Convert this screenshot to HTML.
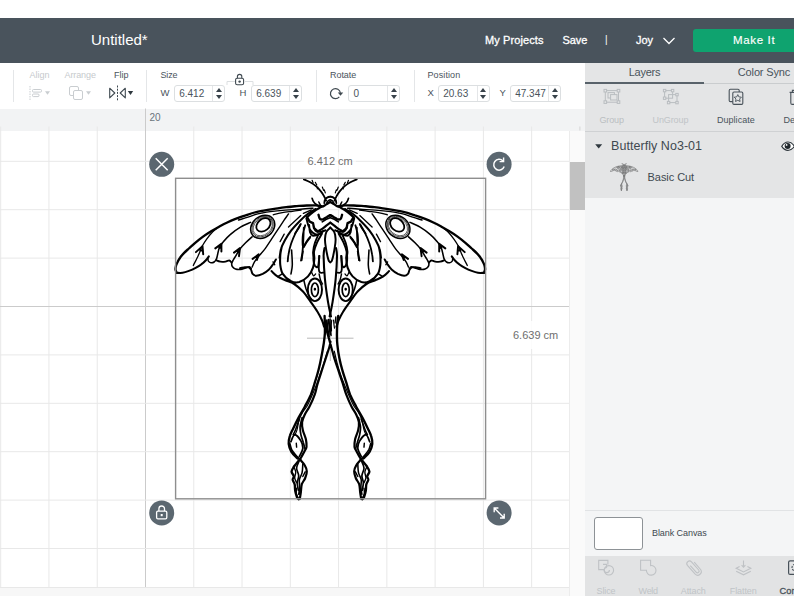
<!DOCTYPE html>
<html><head><meta charset="utf-8"><title>Design Space</title>
<style>
*{box-sizing:border-box;margin:0;padding:0}
html,body{width:794px;height:596px;overflow:hidden;background:#fff;font-family:"Liberation Sans",sans-serif;}
#app{position:relative;width:794px;height:596px;overflow:hidden;background:#fff}
.abs{position:absolute}
svg{position:absolute;overflow:visible}
#hdr{left:0;top:18px;width:794px;height:45px;background:#49535c}
.t{position:absolute;white-space:nowrap;line-height:14px;height:14px;color:#4a545c}
#hdr .t{color:#fff}
#tb{left:0;top:63px;width:585px;height:45.5px;background:#fff}
.l9{font-size:9px}
.dis{color:#c6cacd !important}
.inp{position:absolute;top:22px;height:16.5px;border:1px solid #dcdfe1;border-radius:3px;background:#fff}
.inp .v{position:absolute;left:4.2px;top:0.5px;font-size:10px;line-height:14px;color:#4a545c;white-space:nowrap}
.inp .s{position:absolute;right:11px;top:0;width:1px;height:100%;background:#e4e6e8}
.inp .u{position:absolute;right:2.5px;top:2.2px;width:0;height:0;border-left:3px solid transparent;border-right:3px solid transparent;border-bottom:4.6px solid #38424a}
.inp .d{position:absolute;right:2.5px;top:8.6px;width:0;height:0;border-left:3px solid transparent;border-right:3px solid transparent;border-top:4.6px solid #38424a}
.sep{position:absolute;width:1px;top:7px;height:32px;background:#e4e6e8}
#ruler{left:0;top:108.5px;width:585px;height:22px;background:#f2f3f4}
#canvas{left:0;top:130.5px;width:569px;height:466px;background:#fff;overflow:hidden}
#panel{left:585px;top:63px;width:209px;height:533px;background:#f4f5f6;overflow:hidden}
#hdr .m{-webkit-text-stroke:0.3px #fff}

</style></head><body><div id="app">
<div id="hdr" class="abs">
 <div class="t" style="left:91px;top:12px;font-size:15px;line-height:20px;height:20px">Untitled*</div>
 <div class="t m" style="left:485px;top:15px;font-size:11px;letter-spacing:0.1px">My Projects</div>
 <div class="t m" style="left:562.5px;top:15px;font-size:11px;letter-spacing:-0.1px">Save</div>
 <div class="t" style="left:605px;top:15px;font-size:10px">|</div>
 <div class="t m" style="left:636px;top:15px;font-size:11px">Joy</div>
 <svg style="left:662px;top:19px" width="14" height="9" viewBox="0 0 14 9"><path d="M1.5 1 L7 6.5 L12.5 1" fill="none" stroke="#fff" stroke-width="1.3"/></svg>
 <div class="abs" style="left:693px;top:11px;width:110px;height:23px;background:#0fa36f;border-radius:3px"></div>
 <div class="t" style="left:733px;top:14.8px;font-size:11.5px;letter-spacing:0.65px;-webkit-text-stroke:0.15px #fff">Make It</div>
</div>

<div id="tb" class="abs">
 <div class="sep" style="left:13px"></div>
 <div class="t l9 dis" style="left:29.5px;top:5px">Align</div>
 <svg style="left:29px;top:22px" width="24" height="16" viewBox="0 0 24 16"><path d="M1 1v14" stroke="#c9cdd0" stroke-width="1" stroke-dasharray="1.5 1" fill="none"/><rect x="3.5" y="4.5" width="9" height="2.6" rx="1" fill="none" stroke="#c9cdd0"/><rect x="3.5" y="9" width="6.5" height="2.6" rx="1" fill="none" stroke="#c9cdd0"/><path d="M16 6.2h5l-2.5 3.6z" fill="#c9cdd0"/></svg>
 <div class="t l9 dis" style="left:64.5px;top:5px;letter-spacing:-0.1px">Arrange</div>
 <svg style="left:68px;top:22px" width="26" height="16" viewBox="0 0 26 16"><rect x="1.5" y="1.5" width="9" height="9" rx="1.5" fill="#fff" stroke="#c9cdd0"/><rect x="5.5" y="5.5" width="9" height="9" rx="1.5" fill="#fff" stroke="#c9cdd0"/><path d="M18 6.2h5l-2.5 3.6z" fill="#c9cdd0"/></svg>
 <div class="t l9" style="left:114px;top:5px">Flip</div>
 <svg style="left:108px;top:22px" width="28" height="16" viewBox="0 0 28 16"><path d="M9.5 0.5v15" stroke="#3f4950" stroke-width="1" stroke-dasharray="2 1.2" fill="none"/><path d="M1.7 3.2 L6.8 8 L1.7 12.8z M17.3 3.2 L12.2 8 L17.3 12.8z" fill="none" stroke="#3f4950" stroke-width="1.1" stroke-linejoin="round"/><path d="M19.8 6h5.4l-2.7 4z" fill="#2f383f"/></svg>
 <div class="sep" style="left:146px"></div>
 <div class="t l9" style="left:160.5px;top:5px;letter-spacing:-0.15px">Size</div>
 <div class="t" style="left:160.5px;top:23px;font-size:9.5px">W</div>
 <div class="inp" style="left:174px;width:51px"><span class="v">6.412</span><i class="s"></i><i class="u"></i><i class="d"></i></div>
 <svg style="left:226px;top:8.7px" width="28" height="16" viewBox="0 0 28 16"><path d="M1 13v-3.5h8 M27 13v-3.5h-8" fill="none" stroke="#dcdfe1"/><rect x="9.6" y="6.2" width="8" height="6.6" rx="1.6" fill="#fff" stroke="#3f4950" stroke-width="1.1"/><path d="M11.4 6.2v-1.6a2.2 2.2 0 0 1 4.4 0v1.6" fill="none" stroke="#3f4950" stroke-width="1.1"/><circle cx="13.6" cy="9.6" r="1.2" fill="#3f4950"/></svg>
 <div class="t" style="left:239.5px;top:23px;font-size:9.5px">H</div>
 <div class="inp" style="left:251px;width:51px"><span class="v">6.639</span><i class="s"></i><i class="u"></i><i class="d"></i></div>
 <div class="sep" style="left:315.5px"></div>
 <div class="t l9" style="left:330px;top:5px;letter-spacing:-0.05px">Rotate</div>
 <svg style="left:328px;top:23px" width="16" height="14" viewBox="0 0 16 14"><path d="M11.3 10.8A5 5 0 1 1 12.4 6.8" fill="none" stroke="#3f4950" stroke-width="1.2"/><path d="M9.8 6.4h5.4l-2.7 3.4z" fill="#3f4950"/></svg>
 <div class="inp" style="left:348px;width:52px"><span class="v" style="left:4.5px">0</span><i class="s"></i><i class="u"></i><i class="d"></i></div>
 <div class="sep" style="left:413.5px"></div>
 <div class="t l9" style="left:427.5px;top:5px;letter-spacing:0.1px">Position</div>
 <div class="t" style="left:427.5px;top:23px;font-size:9.5px">X</div>
 <div class="inp" style="left:438px;width:51.5px"><span class="v">20.63</span><i class="s"></i><i class="u"></i><i class="d"></i></div>
 <div class="t" style="left:499.5px;top:23px;font-size:9.5px">Y</div>
 <div class="inp" style="left:510px;width:51px"><span class="v">47.347</span><i class="s"></i><i class="u"></i><i class="d"></i></div>
</div>

<div id="ruler" class="abs"></div>
<div id="canvas" class="abs"></div>
<svg style="left:0;top:0" width="794" height="596" viewBox="0 0 794 596" fill="none" stroke-width="1">
<path d="M0.69 126.5V596" stroke="#e8e8e8"/>
<path d="M48.96 126.5V596" stroke="#e8e8e8"/>
<path d="M97.23 126.5V596" stroke="#e8e8e8"/>
<path d="M145.50 108.5V596" stroke="#cbcbcb"/>
<path d="M193.77 126.5V596" stroke="#e8e8e8"/>
<path d="M242.04 126.5V596" stroke="#e8e8e8"/>
<path d="M290.31 126.5V596" stroke="#e8e8e8"/>
<path d="M338.58 126.5V596" stroke="#e8e8e8"/>
<path d="M386.85 126.5V596" stroke="#e8e8e8"/>
<path d="M435.12 126.5V596" stroke="#e8e8e8"/>
<path d="M483.39 126.5V596" stroke="#e8e8e8"/>
<path d="M531.66 126.5V596" stroke="#e8e8e8"/>
<path d="M579.9 126.5V130.5" stroke="#d4d4d4"/>
<path d="M0 161.30H569" stroke="#e8e8e8"/>
<path d="M0 209.70H569" stroke="#e8e8e8"/>
<path d="M0 258.10H569" stroke="#e8e8e8"/>
<path d="M0 306.50H569" stroke="#cbcbcb"/>
<path d="M0 354.90H569" stroke="#e8e8e8"/>
<path d="M0 403.30H569" stroke="#e8e8e8"/>
<path d="M0 451.70H569" stroke="#e8e8e8"/>
<path d="M0 500.10H569" stroke="#e8e8e8"/>
<path d="M0 548.50H569" stroke="#e8e8e8"/>
<path d="M0 596.90H569" stroke="#e8e8e8"/>
</svg>
<div class="t" style="left:149.5px;top:110.5px;font-size:10px;color:#6a747c">20</div>
<div class="abs" style="left:569px;top:130.5px;width:16px;height:466px;background:#fafafa;border-left:1px solid #ececec"></div>
<div class="abs" style="left:569.5px;top:161.5px;width:15.5px;height:48.5px;background:#c1c1c1"></div>
<div class="abs" style="left:0;top:587px;width:569px;height:9px;background:#f7f7f7;border-top:1px solid #e8e8e8"></div>
<div class="abs" style="left:509px;top:321px;width:54px;height:28px;background:#fff;opacity:.85"></div>
<div class="abs" style="left:304px;top:152px;width:52px;height:17px;background:#fff;opacity:.6"></div>
<div class="t" style="left:307.5px;top:154px;font-size:11px;color:#6e6e6e">6.412 cm</div>
<div class="t" style="left:513px;top:328px;font-size:11px;color:#6e6e6e">6.639 cm</div>
<svg style="left:0;top:0" width="794" height="596" viewBox="0 0 794 596">
<path d="M307 338.2H353.5M330.3 315V361" stroke="#b9b9b9" stroke-width="1" fill="none"/>
<g id="moth" fill="none" stroke="#000" stroke-linecap="round" stroke-linejoin="round">
<g id="mh"><path style="stroke-width:calc(var(--m,1)*2.34px)" d="M176.5 272.8C176.4 272.2 175.6 270.4 175.5 269.3C175.5 268.1 175.7 267.0 176.0 265.7C176.4 264.5 176.9 263.3 177.6 262.0C178.2 260.6 179.0 259.2 180.1 257.7C181.1 256.2 182.4 254.7 183.9 253.1C185.3 251.6 187.0 250.2 188.9 248.5C190.8 246.8 192.9 244.8 195.2 242.8C197.5 240.9 200.0 238.9 202.7 236.9C205.5 234.9 208.8 232.8 211.6 231.1C214.3 229.4 216.6 228.1 219.1 226.7C221.6 225.3 223.9 224.0 226.7 222.7C229.4 221.4 232.3 220.1 235.5 218.9C238.6 217.7 241.8 216.6 245.6 215.4C249.3 214.1 252.8 212.7 258.2 211.6C263.5 210.4 272.8 209.2 277.8 208.4C282.7 207.6 284.7 207.4 287.9 207.0C291.0 206.6 293.5 206.4 296.7 206.1C299.8 205.9 303.6 205.6 306.8 205.5C309.9 205.4 313.1 205.3 315.6 205.4C318.0 205.5 320.6 206.0 321.6 206.1M307.0 217.2L309.7 221.6L313.0 223.1L314.0 228.1L317.8 231.3M318.5 214.8C318.7 215.3 319.0 216.8 319.3 217.6C319.6 218.3 319.9 219.1 320.6 219.3C321.2 219.6 322.4 219.5 323.5 219.1C324.5 218.7 325.7 217.7 326.9 217.1C328.0 216.4 329.7 215.4 330.3 215.1"/><path style="stroke-width:calc(var(--m,1)*2.08px)" d="M176.5 272.8C177.6 272.8 180.5 273.1 182.6 272.8C184.7 272.5 186.8 271.7 188.9 270.9C191.0 270.1 193.1 269.2 195.2 268.1C197.3 267.0 199.7 265.6 201.5 264.2C203.3 262.9 204.7 261.5 205.9 260.2C207.1 258.9 208.3 257.1 208.8 256.4M324.6 248.0C324.4 249.3 323.6 250.9 323.6 256.0C323.7 261.1 324.2 271.0 324.9 278.6C325.6 286.2 327.0 295.5 328.0 301.8C329.0 308.1 330.5 314.1 331.0 316.5M314.0 227.6C314.3 228.2 314.9 230.5 316.2 231.2C317.4 231.8 319.9 231.8 321.5 231.7C323.0 231.6 324.8 230.5 325.4 230.3M315.8 209.0C314.5 209.8 310.5 211.8 307.9 213.8C305.2 215.8 302.7 218.1 299.9 220.9C297.1 223.7 293.6 227.3 291.1 230.6C288.6 233.8 286.6 237.2 284.9 240.3C283.2 243.4 281.8 246.2 281.0 249.1C280.1 252.0 279.9 256.4 279.6 257.9M281.6 247.4C281.4 248.7 280.5 252.1 280.3 255.0C280.1 257.9 279.9 261.9 280.3 265.1C280.7 268.2 281.1 271.3 282.8 273.9C284.5 276.5 287.6 279.5 290.4 280.8C293.1 282.2 296.3 282.8 299.2 282.1C302.1 281.3 305.7 278.8 308.0 276.4C310.3 274.0 312.0 270.5 313.0 267.6C314.1 264.7 314.2 261.3 314.3 258.8C314.4 256.3 313.8 253.5 313.7 252.5M271.5 271.1C272.5 272.0 275.5 275.2 277.8 276.7C280.1 278.2 282.6 279.0 285.3 280.2C288.1 281.4 291.2 282.1 294.2 284.0C297.1 285.9 300.2 288.6 303.0 291.5C305.7 294.5 308.1 298.2 310.5 301.6C312.9 305.0 315.5 308.5 317.5 311.7C319.4 314.8 321.0 318.0 322.1 320.5C323.2 323.0 323.8 325.7 324.1 326.8"/><path style="stroke-width:calc(var(--m,1)*1.43px)" d="M238.6 220.0C240.2 219.5 245.2 218.0 248.0 217.1C250.8 216.2 252.8 215.3 255.1 214.6C257.4 213.9 259.5 213.5 262.0 213.0C264.5 212.5 266.3 212.1 270.2 211.6C274.1 211.1 280.2 210.5 285.3 210.1C290.4 209.7 295.9 209.6 300.5 209.3C305.1 209.0 310.9 208.4 313.0 208.2M288.5 213.9C287.8 215.0 285.9 217.6 284.1 220.2C282.3 222.9 279.9 226.5 277.8 229.7C275.7 232.8 273.6 236.0 271.5 239.1C269.4 242.3 267.3 245.7 265.2 248.6C263.1 251.4 260.7 253.9 258.9 256.1C257.1 258.3 255.6 260.0 254.5 261.8C253.4 263.6 252.5 266.2 252.1 267.1M318.8 202.0C319.0 202.4 319.7 203.7 320.1 204.5C320.4 205.3 320.6 206.4 320.7 206.7M319.1 273.9C319.3 274.9 320.0 278.5 320.6 280.2C321.2 281.9 322.2 283.3 322.5 284.0M296.3 443.2L296.6 447.1M293.5 466.4C293.9 467.3 295.5 469.9 295.7 471.8C295.9 473.8 294.6 476.2 294.7 478.0C294.9 479.8 296.3 481.9 296.6 482.6M305.2 471.8L302.8 476.5M296.6 488.1C296.5 489.0 296.0 491.9 296.3 493.5C296.5 495.0 297.7 496.8 298.0 497.5"/><path style="stroke-width:calc(var(--m,1)*1.30px)" d="M273.2 214.8C274.7 214.4 279.1 213.2 282.3 212.6C285.5 212.0 289.3 211.7 292.4 211.3C295.5 210.9 299.6 210.4 301.0 210.2M216.3 228.7C215.5 229.4 213.2 231.2 211.6 233.0C209.9 234.8 208.1 237.1 206.5 239.3C204.9 241.5 203.5 243.7 202.1 246.3C200.8 249.0 199.8 252.2 198.3 255.4C196.9 258.6 194.1 263.8 193.3 265.5M288.5 227.0L300.8 215.6M280.1 241.6L284.2 234.1M303.4 213.4L311.4 209.9M273.0 261.9L274.8 264.8M311.8 272.6C312.1 273.2 313.0 275.6 313.7 275.8C314.3 276.0 315.3 274.2 315.6 273.9M300.6 488.1L299.4 494.2"/><path style="stroke-width:calc(var(--m,1)*1.56px)" d="M250.6 222.4C248.9 223.2 243.9 225.1 240.5 227.1C237.2 229.1 233.4 231.7 230.5 234.3C227.5 236.8 224.7 240.0 222.9 242.2C221.0 244.4 220.3 245.4 219.4 247.6C218.4 249.8 217.9 253.5 217.4 255.4C216.9 257.3 216.9 258.1 216.3 259.2C215.8 260.3 215.0 261.4 214.1 262.0C213.2 262.6 211.9 262.9 210.9 262.7C210.0 262.6 208.9 261.8 208.4 261.1C207.9 260.3 207.9 258.7 207.8 258.2M252.1 236.8C251.0 237.8 247.6 240.8 245.6 242.8C243.5 244.9 241.5 247.0 239.9 249.1C238.3 251.2 237.3 253.5 236.1 255.4C235.0 257.3 233.7 259.1 233.0 260.5C232.2 261.8 231.8 262.6 231.7 263.6C231.6 264.7 231.8 265.8 232.5 266.8C233.1 267.7 234.1 268.6 235.5 269.0C236.8 269.5 238.8 269.6 240.5 269.4C242.2 269.2 244.1 268.4 245.6 268.0C247.0 267.6 248.4 266.8 249.3 266.9C250.3 267.0 250.9 268.3 251.2 268.6M326.7 203.2C327.0 202.8 327.6 201.3 328.2 200.7C328.8 200.1 329.9 200.0 330.3 199.8M322.2 221.9C322.9 221.4 325.0 220.0 326.3 219.3C327.7 218.6 329.6 217.9 330.3 217.6M291.6 250.0C291.7 252.5 292.4 261.1 292.3 265.1C292.2 269.1 291.2 272.4 291.0 273.9M303.0 251.2L301.7 260.3M277.8 276.7L282.2 273.9M304.0 280.8C304.3 282.2 305.3 286.5 306.1 289.0C307.0 291.5 308.1 294.2 309.0 295.9C309.9 297.7 311.1 298.8 311.5 299.3M299.4 419.1C298.7 420.9 296.5 427.3 295.5 429.9C294.5 432.5 293.6 433.8 293.2 434.6M289.8 443.2C290.1 444.3 290.7 447.5 291.6 449.4C292.6 451.3 294.3 453.4 295.5 454.8C296.7 456.3 298.5 457.7 299.1 458.2M302.8 464.1C302.7 465.5 302.7 470.0 302.1 472.6C301.6 475.2 299.8 477.1 299.4 479.6C299.0 482.0 299.8 484.8 299.7 487.3C299.6 489.7 298.9 493.1 298.7 494.2"/><path style="stroke-width:calc(var(--m,1)*1.82px)" d="M216.1 260.2C216.8 260.5 218.8 261.5 220.4 261.7C221.9 261.9 223.9 261.8 225.4 261.6C226.9 261.4 228.2 260.2 229.2 260.3C230.2 260.5 231.1 262.1 231.5 262.5M303.9 179.4C305.0 179.9 308.2 181.2 310.2 182.3C312.2 183.4 314.1 184.6 315.9 186.1C317.7 187.6 319.5 189.6 320.9 191.4C322.3 193.1 323.5 195.1 324.3 196.7C325.2 198.2 325.8 199.9 326.1 200.6M324.3 203.2C324.4 202.6 324.4 200.7 325.0 199.7C325.5 198.7 326.6 197.9 327.5 197.4C328.4 196.9 329.8 196.8 330.3 196.7M319.3 255.9C319.2 258.1 318.7 266.3 318.8 269.1C319.0 271.9 319.4 272.0 320.1 272.6C320.9 273.2 322.9 272.6 323.4 272.6M303.8 227.6C303.7 229.4 303.6 234.3 303.4 238.2C303.2 242.2 302.9 247.7 302.5 251.5C302.1 255.2 301.2 259.2 301.0 260.7M300.8 224.0C299.9 225.5 297.1 229.9 295.5 233.2C293.9 236.5 292.3 240.3 291.1 243.8C289.9 247.3 289.0 251.4 288.5 254.4C287.9 257.3 287.9 260.3 287.7 261.4M305.2 225.3C304.8 226.8 303.4 231.2 303.0 234.1C302.6 237.0 302.5 240.7 302.6 242.9C302.6 245.2 302.9 247.5 303.4 247.5C304.0 247.5 305.0 244.6 306.1 242.9C307.2 241.3 309.4 238.5 310.1 237.6M318.4 234.5C317.8 235.9 315.8 240.1 314.9 242.9C314.0 245.8 313.3 249.2 313.1 251.7C313.0 254.2 313.9 256.9 314.0 257.9M290.9 441.7C291.5 440.5 293.1 434.9 294.7 434.7C296.4 434.6 299.6 438.6 300.9 440.9C302.3 443.2 303.0 446.1 302.8 448.6C302.5 451.2 299.9 455.1 299.4 456.4"/><path style="stroke-width:calc(var(--m,1)*1.95px)" d="M240.0 268.2C240.8 268.1 243.6 267.5 245.0 267.3C246.5 267.2 247.8 266.9 248.8 267.3C249.8 267.8 250.5 268.8 251.1 269.9C251.7 271.0 251.7 272.9 252.6 273.9C253.5 274.9 254.7 275.8 256.4 275.8C258.1 275.8 260.6 274.9 262.7 273.9C264.8 272.8 267.2 271.2 269.0 269.5C270.8 267.8 272.2 265.5 273.4 263.8C274.5 262.1 275.5 260.1 275.9 259.4M195.9 252.1L202.5 246.1L203.2 254.2M199.2 249.1L201.0 250.6L202.9 250.1M215.3 248.4L221.4 243.8L221.4 251.4M218.4 246.1L219.9 247.9L221.4 247.6M234.0 252.6L240.0 248.1L239.0 256.2M237.0 250.4L238.3 252.3L239.5 252.1M252.6 258.9L258.7 254.4L256.9 259.9M255.6 256.7L256.7 257.9L257.8 257.2M306.4 218.5C306.7 219.6 307.5 223.0 308.2 225.1C309.0 227.2 309.7 229.4 311.0 230.9C312.2 232.5 314.3 234.0 315.8 234.4C317.3 234.9 318.8 234.3 320.1 233.7C321.3 233.1 322.9 231.2 323.5 230.7M330.3 227.6C329.6 228.4 327.2 230.1 326.3 232.1C325.4 234.0 325.1 236.5 325.0 239.1C324.9 241.8 325.4 245.0 325.9 247.9C326.3 250.9 327.1 254.5 327.6 256.7C328.1 259.0 328.5 260.2 329.0 261.2C329.4 262.1 330.1 262.0 330.3 262.2M321.9 233.8C321.1 235.3 318.4 239.7 317.0 242.6C315.7 245.6 314.5 248.5 314.0 251.5C313.4 254.4 313.4 257.9 313.5 260.3C313.7 262.6 314.1 264.5 314.8 265.6C315.6 266.6 317.4 268.1 318.1 266.4C318.8 264.8 319.1 257.6 319.3 255.9M309.1 225.0C309.3 226.2 309.4 230.3 310.0 232.1C310.6 233.8 311.3 235.1 312.6 235.6C314.0 236.0 316.4 235.1 317.9 234.7C319.5 234.3 321.2 233.4 321.9 233.1"/><path style="stroke-width:calc(var(--m,1)*1.17px)" d="M312.1 180.3L313.1 182.8M315.3 182.3L316.8 185.1M322.3 187.0L323.6 190.4M324.3 189.9L325.3 192.9M317.8 187.0L317.3 188.9"/><path style="stroke-width:calc(var(--m,1)*1.69px)" d="M312.1 198.3C312.3 198.8 312.7 200.5 313.4 201.4C314.0 202.4 315.0 203.5 315.9 204.2C316.8 205.0 318.1 205.7 318.5 206.0M303.4 247.0C304.0 246.0 305.7 242.6 306.9 240.9C308.1 239.1 309.8 237.2 310.4 236.5M295.0 233.4C295.6 232.6 297.6 229.9 298.5 228.5C299.4 227.1 300.0 225.6 300.3 225.0M302.1 417.6C301.8 419.1 300.3 424.0 300.1 426.8C299.9 429.7 300.4 432.0 300.9 434.6C301.4 437.1 302.6 440.0 303.2 442.3C303.9 444.6 304.6 447.4 304.9 448.5M299.4 460.2C298.9 461.5 296.7 465.4 296.6 468.0C296.5 470.5 298.6 473.2 298.7 475.7C298.9 478.1 297.3 480.2 297.2 482.6C297.2 485.1 298.2 489.1 298.4 490.4"/><path style="stroke-width:calc(var(--m,1)*2.21px)" d="M330.3 202.0C329.7 202.3 327.9 203.3 326.9 204.0C325.8 204.6 325.1 205.3 323.8 206.0C322.6 206.7 321.1 207.0 319.3 208.0C317.5 209.0 315.1 210.5 313.0 212.0C310.9 213.6 308.0 216.3 307.0 217.2M317.8 231.3C318.5 230.9 320.8 229.8 322.2 228.9C323.6 228.0 325.0 226.7 326.3 225.6C327.7 224.6 329.6 223.2 330.3 222.7"/><ellipse cx="262.7" cy="226.8" rx="13.1" ry="10.5" style="stroke-width:calc(var(--m,1)*1.49px)" transform="rotate(-40 262.7 226.8)"/><ellipse cx="262.7" cy="226.6" rx="11.8" ry="9.2" style="stroke-width:calc(var(--m,1)*0.65px)" transform="rotate(-40 262.7 226.6)"/><ellipse cx="262.8" cy="226.5" rx="10.7" ry="8.1" style="stroke-width:calc(var(--m,1)*0.59px)" transform="rotate(-40 262.8 226.5)"/><ellipse cx="263.4" cy="224.9" rx="7.9" ry="5.8" style="stroke-width:calc(var(--m,1)*1.82px)" transform="rotate(-40 263.4 224.9)"/><ellipse cx="314.9" cy="289.8" rx="7.1" ry="11.3" style="stroke-width:calc(var(--m,1)*1.95px)" transform="rotate(0 314.9 289.8)"/><ellipse cx="314.9" cy="289.8" rx="3.5" ry="6.8" style="stroke-width:calc(var(--m,1)*1.69px)" transform="rotate(0 314.9 289.8)"/><ellipse cx="314.9" cy="289.3" rx="0.6" ry="0.8" style="stroke-width:calc(var(--m,1)*1.30px)" fill="#000" transform="rotate(0 314.9 289.3)"/></g>
<use href="#mh" transform="translate(660.6 0) scale(-1 1)"/>
<path style="stroke-width:calc(var(--m,1)*2.34px)" d="M324.6 315.9C324.6 316.9 324.7 319.1 324.8 322.0C324.8 324.8 325.0 329.5 324.9 333.1C324.7 336.6 324.3 339.4 323.8 343.1C323.2 346.8 322.6 350.9 321.7 355.2C320.9 359.6 319.8 365.0 318.7 369.3C317.6 373.7 316.5 377.3 315.2 381.4C313.9 385.6 312.7 390.1 311.0 394.4C309.2 398.6 306.8 402.9 304.8 406.7C302.7 410.6 300.5 413.9 298.6 417.6C296.7 421.2 294.7 425.3 293.2 428.4C291.7 431.5 290.5 433.5 289.8 436.1C289.0 438.7 288.4 441.2 288.7 443.8C289.0 446.4 290.0 449.4 291.3 451.7C292.6 454.0 295.3 456.3 296.6 457.6C297.9 458.9 299.4 458.4 299.1 459.8C298.7 461.2 295.7 464.0 294.4 466.0C293.2 467.9 291.7 469.8 291.6 471.5C291.5 473.2 293.6 474.8 293.8 476.2C294.0 477.5 292.6 478.5 292.7 479.9C292.9 481.3 294.3 482.7 294.7 484.5C295.1 486.3 294.8 488.5 295.2 490.7C295.6 492.8 296.5 495.9 297.0 497.3C297.6 498.7 298.5 498.9 298.7 499.2M338.2 315.9C338.0 316.9 337.6 318.8 337.4 322.0C337.1 325.2 336.9 331.2 336.9 335.1C336.9 338.9 336.9 341.3 337.4 345.2C337.8 349.0 338.5 354.1 339.4 358.2C340.2 362.4 341.3 366.5 342.4 370.3C343.5 374.2 344.6 377.4 345.9 381.4C347.2 385.4 348.3 390.1 350.0 394.4C351.8 398.6 354.2 402.9 356.2 406.7C358.3 410.6 360.5 413.9 362.4 417.6C364.3 421.2 366.3 425.3 367.8 428.4C369.3 431.5 370.5 433.5 371.2 436.1C372.0 438.7 372.6 441.2 372.3 443.8C372.0 446.4 371.0 449.4 369.7 451.7C368.4 454.0 365.7 456.3 364.4 457.6C363.1 458.9 361.6 458.4 361.9 459.8C362.3 461.2 365.3 464.0 366.6 466.0C367.8 467.9 369.3 469.8 369.4 471.5C369.5 473.2 367.4 474.8 367.2 476.2C367.0 477.5 368.4 478.5 368.3 479.9C368.1 481.3 366.7 482.7 366.3 484.5C365.9 486.3 366.2 488.5 365.8 490.7C365.4 492.8 364.5 495.9 364.0 497.3C363.4 498.7 362.5 498.9 362.3 499.2"/>
<path style="stroke-width:calc(var(--m,1)*2.21px)" d="M330.5 341.6C330.3 342.5 330.1 344.4 329.3 347.2C328.5 349.9 327.1 354.1 325.8 358.2C324.4 362.4 322.6 368.0 321.2 372.4C319.8 376.7 318.5 380.8 317.4 384.4C316.3 388.1 316.2 390.7 314.8 394.4C313.5 398.1 311.1 403.4 309.4 406.7C307.7 410.1 306.0 411.9 304.8 414.5C303.6 417.0 302.5 419.6 302.1 422.2C301.8 424.8 302.1 427.1 302.8 429.9C303.4 432.7 305.2 436.4 305.9 439.2C306.5 442.0 306.6 445.0 306.5 446.9C306.3 448.8 305.8 448.9 304.9 450.5C304.1 452.1 302.3 455.1 301.5 456.7C300.8 458.2 300.1 458.4 300.6 459.8C301.1 461.2 303.6 463.1 304.6 465.0C305.7 466.9 306.7 469.0 306.8 471.2C306.9 473.4 306.1 475.8 305.2 478.0C304.4 480.2 302.6 481.9 301.8 484.2C301.1 486.5 301.2 489.5 300.9 491.9C300.6 494.3 300.0 497.6 299.8 498.7M326.5 330.0C326.9 331.4 328.0 335.2 328.8 338.1C329.6 341.0 330.4 343.8 331.3 347.2C332.2 350.5 333.2 354.4 334.3 358.2C335.5 362.1 337.0 366.2 338.4 370.3C339.7 374.5 341.3 378.9 342.6 382.9C343.9 386.9 344.7 390.4 346.2 394.4C347.7 398.3 349.9 403.4 351.6 406.7C353.3 410.1 355.0 411.9 356.2 414.5C357.4 417.0 358.5 419.6 358.9 422.2C359.2 424.8 358.9 427.1 358.2 429.9C357.6 432.7 355.8 436.4 355.1 439.2C354.5 442.0 354.4 445.0 354.5 446.9C354.7 448.8 355.2 448.9 356.1 450.5C356.9 452.1 358.7 455.1 359.5 456.7C360.2 458.2 360.9 458.4 360.4 459.8C359.9 461.2 357.4 463.1 356.4 465.0C355.3 466.9 354.3 469.0 354.2 471.2C354.1 473.4 354.9 475.8 355.8 478.0C356.6 480.2 358.4 481.9 359.2 484.2C359.9 486.5 359.8 489.5 360.1 491.9C360.4 494.3 361.0 497.6 361.2 498.7"/>
<path style="stroke-width:calc(var(--m,1)*1.17px)" d="M327.5 351.2C326.9 353.2 325.0 359.3 323.8 363.3C322.5 367.3 320.9 371.9 319.7 375.4C318.5 378.9 317.8 381.3 316.6 384.4C315.4 387.6 314.1 390.8 312.5 394.4C310.9 398.0 308.6 403.1 307.1 406.0C305.5 408.8 304.5 409.2 303.2 411.4C301.9 413.6 300.4 416.0 299.4 419.1C298.3 422.2 297.8 427.2 297.0 429.9C296.3 432.6 295.1 434.4 294.7 435.3M334.3 351.2C334.8 353.2 336.1 359.3 337.2 363.3C338.2 367.3 339.7 371.9 340.9 375.4C342.1 378.9 343.1 381.3 344.4 384.4C345.7 387.6 346.9 390.8 348.5 394.4C350.1 398.0 352.4 403.1 353.9 406.0C355.5 408.8 356.5 409.2 357.8 411.4C359.1 413.6 360.6 416.0 361.6 419.1C362.7 422.2 363.2 427.2 364.0 429.9C364.7 432.6 365.9 434.4 366.3 435.3M331.7 320.0C331.6 320.8 331.3 323.2 331.3 325.0C331.3 326.8 331.5 330.0 331.5 331.0M333.5 320.0C333.6 320.6 333.8 322.6 333.9 324.0C334.1 325.4 334.4 327.5 334.5 328.2"/>
<path style="stroke-width:calc(var(--m,1)*1.69px)" d="M325.5 321.0C325.5 321.8 325.6 324.3 325.9 326.0C326.1 327.7 326.7 330.2 326.9 331.0M326.9 320.0C327.0 321.1 327.1 324.3 327.5 327.0C327.9 329.7 328.8 334.7 329.1 336.3"/>
<path style="stroke-width:calc(var(--m,1)*1.43px)" d="M328.5 319.5C328.6 320.4 328.6 322.5 328.9 325.0C329.2 327.5 329.9 332.7 330.1 334.3M330.1 319.0C330.1 320.1 330.1 323.3 330.3 326.0C330.5 328.8 331.0 333.9 331.1 335.5"/>
<path style="stroke-width:calc(var(--m,1)*1.30px)" d="M335.8 316.9L335.1 323.0"/>
</g>
<rect x="175.6" y="178.3" width="310" height="320.5" fill="none" stroke="#8e8e8e" stroke-width="1.4"/>
<g fill="#5b6770">
<circle cx="161.7" cy="164.3" r="12.5"/><circle cx="499.1" cy="164.3" r="12.5"/><circle cx="161.7" cy="512.9" r="12.5"/><circle cx="499.1" cy="512.9" r="12.5"/>
</g>
<g fill="none" stroke="#fff" stroke-width="1.5">
<path d="M155.7 158.3l12 12M167.7 158.3l-12 12"/>
<path d="M504.2 166.6a5.4 5.4 0 1 1 -1.2 -5.6" />
<path d="M503.6 157.6v4h-4" stroke-width="1.4"/>
<rect x="156.6" y="511.2" width="10.2" height="7.6" rx="1.3" stroke-width="1.3"/>
<path d="M158.9 511v-2.2a2.8 2.8 0 0 1 5.6 0v2.2" stroke-width="1.3"/>
<path d="M494.5 508.3l9.4 9.4M494.2 512.2v-4.2h4.2M504.2 513.8v4.2h-4.2" stroke-width="1.4"/>
</g>
<rect x="160.7" y="514" width="2" height="2.2" fill="#fff"/>
</svg>

<div id="panel" class="abs">
 <div class="abs" style="left:0;top:0;width:209px;height:135px;background:#e4e5e6"></div>
 <div class="abs" style="left:0;top:19.6px;width:209px;height:1.4px;background:#c9ccce"></div>
 <div class="abs" style="left:0;top:19.3px;width:119px;height:1.9px;background:#58626a"></div>
 <div class="t" style="left:43.7px;top:2px;font-size:11px;letter-spacing:-0.25px">Layers</div>
 <div class="t" style="left:152.8px;top:2px;font-size:11px;letter-spacing:-0.14px">Color Sync</div>
 <svg style="left:0;top:0" width="209" height="70" viewBox="585 63 209 70" fill="none" stroke-width="1">
  <g stroke="#b9bdc0">
   <rect x="605.3" y="90.6" width="13.2" height="11.6"/>
   <rect x="608" y="92.6" width="6.4" height="5.4"/><rect x="610.6" y="94.6" width="6.4" height="5.4" fill="#e4e5e6"/>
   <g fill="#e4e5e6"><rect x="604" y="89.4" width="2.6" height="2.6"/><rect x="617.2" y="89.4" width="2.6" height="2.6"/><rect x="604" y="100.8" width="2.6" height="2.6"/><rect x="617.2" y="100.8" width="2.6" height="2.6"/></g>
   <rect x="664.6" y="90.6" width="8" height="7.6"/><rect x="668.6" y="94.6" width="8.4" height="8"/>
   <g fill="#e4e5e6"><rect x="663.4" y="89.4" width="2.4" height="2.4"/><rect x="671.4" y="89.4" width="2.4" height="2.4"/><rect x="663.4" y="97" width="2.4" height="2.4"/><rect x="675.8" y="93.4" width="2.4" height="2.4"/><rect x="667.4" y="101.4" width="2.4" height="2.4"/><rect x="675.8" y="101.4" width="2.4" height="2.4"/></g>
  </g>
  <g stroke="#48525a" stroke-width="1.1">
   <rect x="729.2" y="89.2" width="10" height="12.4" rx="1.2"/>
   <rect x="732.8" y="92" width="10" height="12.4" rx="1.2" fill="#e4e5e6"/>
   <path d="M737.8 94.6l1.1 2.3 2.5.3-1.8 1.8.5 2.5-2.3-1.2-2.3 1.2.5-2.5-1.8-1.8 2.5-.3z" stroke-width=".9"/>
   <path d="M790.8 92.6v10.4a1.4 1.4 0 0 0 1.4 1.4h4M789.6 92.4h6M792.4 92v-1.6h3"/>
  </g>
 </svg>
 <div class="t l9" style="left:14.5px;top:49.7px;letter-spacing:-0.15px;color:#babec1">Group</div>
 <div class="t l9" style="left:67.5px;top:49.7px;letter-spacing:-0.1px;color:#c0c4c7">UnGroup</div>
 <div class="t l9" style="left:131.9px;top:49.7px;letter-spacing:0.05px">Duplicate</div>
 <div class="t l9" style="left:198.4px;top:49.7px">Delete</div>
 <div class="abs" style="left:0;top:67.6px;width:209px;height:1px;background:#cfd1d3"></div>
 <svg style="left:9.5px;top:81.2px" width="8" height="5" viewBox="0 0 8 5"><path d="M0.2 0.3h7L3.7 4.4z" fill="#2f383f"/></svg>
 <div class="t" style="left:26px;top:74.5px;font-size:12.5px;line-height:16px;height:16px;letter-spacing:0.05px;color:#3f4950">Butterfly No3-01</div>
 <svg style="left:196px;top:78px" width="14" height="10" viewBox="0 0 14 10"><path d="M0.8 5.3C3 1.6 5.2 1 7 1s4.2.8 6.4 4.3C11.200 8.600 9 9.400 7 9.400S3 8.600.8 5.300z" fill="#fff" stroke="#2c343a" stroke-width="1.2"/><circle cx="6.600" cy="5" r="3" fill="#20272c"/><circle cx="5.600" cy="3.900" r=".9" fill="#fff"/></svg>
 <svg style="left:0;top:0" width="209" height="140" viewBox="585 63 209 140"><g style="--m:3.2;opacity:.47" transform="translate(595.25 148.5) scale(0.0876 0.0842)"><use href="#moth"/></g></svg>
 <div class="t" style="left:62.6px;top:107px;font-size:11px;letter-spacing:-0.07px;color:#3f4950">Basic Cut</div>
 <div class="abs" style="left:0;top:447px;width:209px;height:1px;background:#e1e3e5"></div>
 <div class="abs" style="left:9.3px;top:453.5px;width:48.6px;height:33px;background:#fff;border:1px solid #8d9296;border-radius:3px"></div>
 <div class="t l9" style="left:67px;top:463px;letter-spacing:-0.07px;color:#3f4950">Blank Canvas</div>
 <div class="abs" style="left:0;top:492.8px;width:209px;height:41px;background:#e2e3e4"></div>
 <svg style="left:0;top:490px" width="209" height="43" viewBox="585 553 209 43" fill="none" stroke-width="1.1">
  <g stroke="#bfc2c5">
   <path d="M604 569.6h-5.300v-9.200h9.200v4.200"/><circle cx="608.9" cy="570.3" r="4.700"/><path d="M603 564.400h3.600v3M606.800 567.400a2.600 2.600 0 1 0 2.600 2.600"/>
   <path d="M646.400 570.300h-5.800v-10h10v5.300a4.800 4.800 0 1 1 -4.200 4.700z"/>
   <path d="M690.3 565.600l5.800 6.600a1.700 1.700 0 0 0 2.600-2.200l-7.200-8.200a2.700 2.700 0 0 0 -4.100 3.500l7.800 8.900a3.600 3.600 0 0 0 5.400-4.700l-6.400-7.300"/>
   <path d="M743.500 560.500v6.500M741.600 565.200l1.900 2 1.900-2M739.600 566.600l-3.400 1.700 7.300 3.600 7.300-3.600-3.400-1.700M736.200 571.200l7.300 3.600 7.300-3.600"/>
  </g>
  <rect x="788.600" y="560.800" width="9" height="13.600" rx="1.500" stroke="#48525a" stroke-width="1.200"/>
  <path d="M795 564.200a3.400 3.400 0 0 0 -3 3.400a3.400 3.400 0 0 0 3 3.400" stroke="#48525a" stroke-dasharray="2 1.200"/>
 </svg>
 <div class="t l9" style="left:11.6px;top:520.8px;letter-spacing:-0.15px;color:#c0c4c7">Slice</div>
 <div class="t l9" style="left:53.6px;top:520.8px;letter-spacing:-0.3px;color:#c0c4c7">Weld</div>
 <div class="t l9" style="left:95.8px;top:520.8px;letter-spacing:-0.1px;color:#c0c4c7">Attach</div>
 <div class="t l9" style="left:144.8px;top:520.8px;letter-spacing:-0.1px;color:#c0c4c7">Flatten</div>
 <div class="t l9" style="left:194.6px;top:520.8px;-webkit-text-stroke:0.3px #4a545c;font-size:9.3px">Contour</div>
</div>

</div></body></html>
